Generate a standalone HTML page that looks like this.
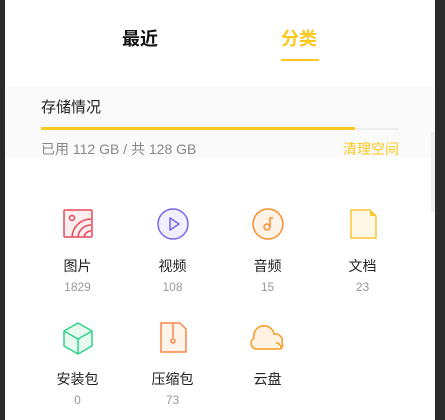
<!DOCTYPE html><html><head><meta charset="utf-8"><style>
body{margin:0;width:445px;height:420px;background:#2b2b2b;overflow:hidden;font-family:"Liberation Sans","Noto Sans CJK SC",sans-serif;position:relative}
.pg{position:absolute;left:5px;top:0;width:430px;height:420px;background:#fff}
.t{position:absolute;font-size:18px;font-weight:bold;top:25px}
.st{position:absolute;left:5px;top:86px;width:430px;height:71px;background:#fafafa}
.cell{position:absolute;width:95px;text-align:center}
.cell svg{display:block;margin:0 auto}
.l{font-size:14px;color:#222;margin-top:18px;line-height:17px}
.c{font-size:12px;color:#999;margin-top:5px;line-height:14px}
</style></head><body><div class="pg"></div>
<div class="t" style="left:122px;color:#111">最近</div>
<div class="t" style="left:281px;color:#fcc81f">分类</div>
<div style="position:absolute;left:281px;top:59px;width:38px;height:2px;background:#fcc81f"></div>
<div class="st"></div>
<div style="position:absolute;left:41px;top:96px;font-size:15px;color:#222">存储情况</div>
<div style="position:absolute;left:41px;top:128px;width:358px;height:2px;background:#eee"></div>
<div style="position:absolute;left:41px;top:127px;width:314px;height:3px;background:#fcc81f"></div>
<div style="position:absolute;left:41px;top:139px;font-size:14px;color:#888">已用 112 GB / 共 128 GB</div>
<div style="position:absolute;left:343px;top:139px;font-size:14px;color:#fcc81f">清理空间</div>
<div style="position:absolute;left:431px;top:132px;width:4px;height:80px;background:#f0f0f0"></div>

<div class="cell" style="left:30px;top:208px"><svg width="32" height="32" viewBox="0 0 32 32"><rect x="2" y="2" width="28" height="27" rx="1" fill="#fdeff0" stroke="#e8485b" stroke-width="1.5"/><circle cx="10" cy="10" r="2.5" fill="none" stroke="#e8485b" stroke-width="1.5"/><path d="M10 29A19 19 0 0 1 29 11M16 29A13 13 0 0 1 29 17M22 29A7 7 0 0 1 29 23" fill="none" stroke="#e8485b" stroke-width="1.5"/></svg><div class="l">图片</div><div class="c">1829</div></div>
<div class="cell" style="left:125px;top:208px"><svg width="32" height="32" viewBox="0 0 32 32"><circle cx="16" cy="16" r="15" fill="#f1efff" stroke="#7b63f0" stroke-width="1.5"/><path d="M13 10L22 16L13 22Z" fill="none" stroke="#7b63f0" stroke-width="1.5" stroke-linejoin="round"/></svg><div class="l">视频</div><div class="c">108</div></div>
<div class="cell" style="left:220px;top:208px"><svg width="32" height="32" viewBox="0 0 32 32"><circle cx="16" cy="16" r="15" fill="#fff3e8" stroke="#f88e2c" stroke-width="1.5"/><circle cx="15" cy="19" r="3" fill="none" stroke="#f88e2c" stroke-width="1.5"/><path d="M18 19V10h3" fill="none" stroke="#f88e2c" stroke-width="1.5"/></svg><div class="l">音频</div><div class="c">15</div></div>
<div class="cell" style="left:315px;top:208px"><svg width="32" height="32" viewBox="0 0 32 32"><path d="M4 2H23L29 8V30H4Z" fill="#fff8e6" stroke="#fcc533" stroke-width="1.5" stroke-linejoin="round"/><path d="M23 2V8H29Z" fill="#fcc533"/></svg><div class="l">文档</div><div class="c">23</div></div>

<div class="cell" style="left:30px;top:321px"><svg width="32" height="34" viewBox="0 0 32 34"><path d="M16 2L30 10V25L16 33L2 25V10Z" fill="#e8faf0" stroke="#2fd38a" stroke-width="1.5" stroke-linejoin="round"/><path d="M2 10L16 18L30 10M16 18V33" fill="none" stroke="#2fd38a" stroke-width="1.5"/></svg><div class="l" style="margin-top:16px">安装包</div><div class="c">0</div></div>
<div class="cell" style="left:125px;top:321px"><svg width="32" height="34" viewBox="0 0 32 34"><path d="M4 2H23L29 8V31H4Z" fill="#fff3ea" stroke="#f8874a" stroke-width="1.5" stroke-linejoin="round"/><path d="M16 2V17" stroke="#f8874a" stroke-width="1.5"/><circle cx="16" cy="20" r="2" fill="none" stroke="#f8874a" stroke-width="1.5"/></svg><div class="l" style="margin-top:16px">压缩包</div><div class="c">73</div></div>
<div class="cell" style="left:220px;top:321px"><svg width="40" height="34" viewBox="0 0 40 34"><path d="M8 28A6 6 0 0 1 6 17A10 10 0 0 1 26 13A7 7 0 0 1 34 22A4 4 0 0 1 32 28Z" fill="#fff2e3" stroke="#f89b23" stroke-width="1.5"/><path d="M28 22A5 5 0 0 1 33 28" fill="none" stroke="#f89b23" stroke-width="1.5"/></svg><div class="l" style="margin-top:16px">云盘</div></div>
</body></html>
